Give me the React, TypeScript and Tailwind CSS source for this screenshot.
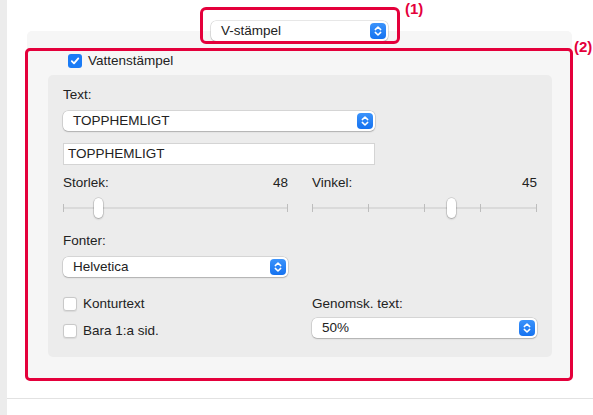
import React from "react";

const font = { fontFamily: '"Liberation Sans", Arial, sans-serif' };

function Stepper() {
  return (
    <svg width="16" height="16" viewBox="0 0 16 16" className="shrink-0">
      <defs>
        <linearGradient id="stg" x1="0" y1="0" x2="0" y2="1">
          <stop offset="0" stopColor="#3b93fb" />
          <stop offset="1" stopColor="#1572f0" />
        </linearGradient>
      </defs>
      <rect x="0" y="0" width="16" height="16" rx="4" fill="url(#stg)" />
      <path d="M5.3 6.6 L8 4 L10.7 6.6" fill="none" stroke="white" strokeWidth="1.5" strokeLinecap="round" strokeLinejoin="round" />
      <path d="M5.3 9.4 L8 12 L10.7 9.4" fill="none" stroke="white" strokeWidth="1.5" strokeLinecap="round" strokeLinejoin="round" />
    </svg>
  );
}

function Popup({ label, className }: { label: string; className: string }) {
  return (
    <div
      className={`flex items-center justify-between bg-white rounded-[5px] pl-[10px] pr-[2px] shadow-[0_0_0_0.5px_rgba(0,0,0,0.18),0_1px_1.5px_rgba(0,0,0,0.18)] text-[13.5px] text-[#222] ${className}`}
    >
      <span className="leading-[16px]">{label}</span>
      <Stepper />
    </div>
  );
}

function Checkbox({ checked }: { checked?: boolean }) {
  if (checked) {
    return (
      <div className="w-[14px] h-[14px] rounded-[3px] bg-[#1a7bf6] flex items-center justify-center shrink-0">
        <svg width="10" height="10" viewBox="0 0 10 10">
          <path d="M1.8 5.2 L4 7.4 L8.3 2.4" fill="none" stroke="white" strokeWidth="1.8" strokeLinecap="round" strokeLinejoin="round" />
        </svg>
      </div>
    );
  }
  return (
    <div className="w-[14px] h-[14px] rounded-[3px] bg-white border border-[#c9c9c9] shadow-[0_0.5px_1px_rgba(0,0,0,0.08)] shrink-0" />
  );
}

function Slider({ ticks, pos }: { ticks: number; pos: number }) {
  return (
    <div className="relative h-[20px] w-[225px]">
      <div className="absolute left-0 right-0 top-[9px] h-[2px] bg-[#dadada]" />
      <div className="absolute left-0 right-0 top-[6px] h-[8px] flex justify-between">
        {Array.from({ length: ticks }).map((_, i) => (
          <div key={i} className="w-px h-[8px] bg-[#bdbdbd]" />
        ))}
      </div>
      <div
        className="absolute top-0 w-[9px] h-[20px] rounded-full bg-white shadow-[0_0_0_0.5px_rgba(0,0,0,0.2),0_1px_2px_rgba(0,0,0,0.25)]"
        style={{ left: `calc(${pos}% - 4.5px)` }}
      />
    </div>
  );
}

export default function App() {
  return (
    <div className="relative w-[593px] h-[415px] overflow-hidden bg-white flex text-[#222]" style={font}>
      <div className="w-[7px] h-full bg-[#ececec] shrink-0" />
      <div className="flex-1 flex flex-col">
        <div className="h-[398px] pt-[31px] pl-[20px]">
          <div className="relative w-[545px] h-[347px] rounded-[5px] bg-[#f6f6f6] pt-[22px] pl-[21px] pr-[20px]">
            <Popup label="V-stämpel" className="absolute left-[184px] top-[-10px] w-[177px] h-[20px]" />
            <div className="flex items-center gap-[6px] pl-[20px] h-[16px] text-[13.5px] leading-[16px]">
              <Checkbox checked />
              <span>Vattenstämpel</span>
            </div>
            <div className="mt-[6px] h-[282px] rounded-[5px] bg-[#ececec] px-[15px] pt-[12px] pb-[19px] text-[13.5px]">
              <div className="leading-[16px]">Text:</div>
              <Popup label="TOPPHEMLIGT" className="mt-[8px] w-[312px] h-[20px]" />
              <div className="mt-[12px] w-[312px] h-[22px] bg-white border border-[#d4d4d4] flex items-center pl-[4px] leading-[16px]">
                TOPPHEMLIGT
              </div>
              <div className="mt-[10px] grid grid-cols-2 gap-x-[24px]">
                <div>
                  <div className="flex justify-between leading-[16px]">
                    <span>Storlek:</span>
                    <span>48</span>
                  </div>
                  <div className="mt-[7px]">
                    <Slider ticks={2} pos={15.8} />
                  </div>
                </div>
                <div>
                  <div className="flex justify-between leading-[16px]">
                    <span>Vinkel:</span>
                    <span>45</span>
                  </div>
                  <div className="mt-[7px]">
                    <Slider ticks={5} pos={62} />
                  </div>
                </div>
              </div>
              <div className="mt-[15px] leading-[16px]">Fonter:</div>
              <Popup label="Helvetica" className="mt-[8px] w-[225px] h-[20px]" />
              <div className="mt-[19px] grid grid-cols-2 gap-x-[24px]">
                <div className="flex flex-col gap-[10px]">
                  <div className="flex items-center gap-[6px] h-[16px] leading-[16px]">
                    <Checkbox />
                    <span>Konturtext</span>
                  </div>
                  <div className="flex items-center gap-[6px] h-[16px] leading-[16px] mt-[1px]">
                    <Checkbox />
                    <span>Bara 1:a sid.</span>
                  </div>
                </div>
                <div>
                  <div className="leading-[16px]">Genomsk. text:</div>
                  <Popup label="50%" className="mt-[6px] w-[225px] h-[20px]" />
                </div>
              </div>
            </div>
          </div>
        </div>
        <div className="h-px bg-[#e2e2e2]" />
      </div>

      {/* annotations */}
      <div className="absolute left-[200px] top-[7px] w-[200px] h-[37px] border-[3px] border-[#e4003b] rounded-[6px]" />
      <div className="absolute left-[405px] top-[0px] text-[15px] leading-[17px] font-bold text-[#e4003b]">(1)</div>
      <div className="absolute left-[25px] top-[48px] w-[548px] h-[333px] border-[3px] border-[#e4003b] rounded-[5px]" />
      <div className="absolute left-[574px] top-[38px] text-[15px] leading-[17px] font-bold text-[#e4003b]">(2)</div>
    </div>
  );
}
